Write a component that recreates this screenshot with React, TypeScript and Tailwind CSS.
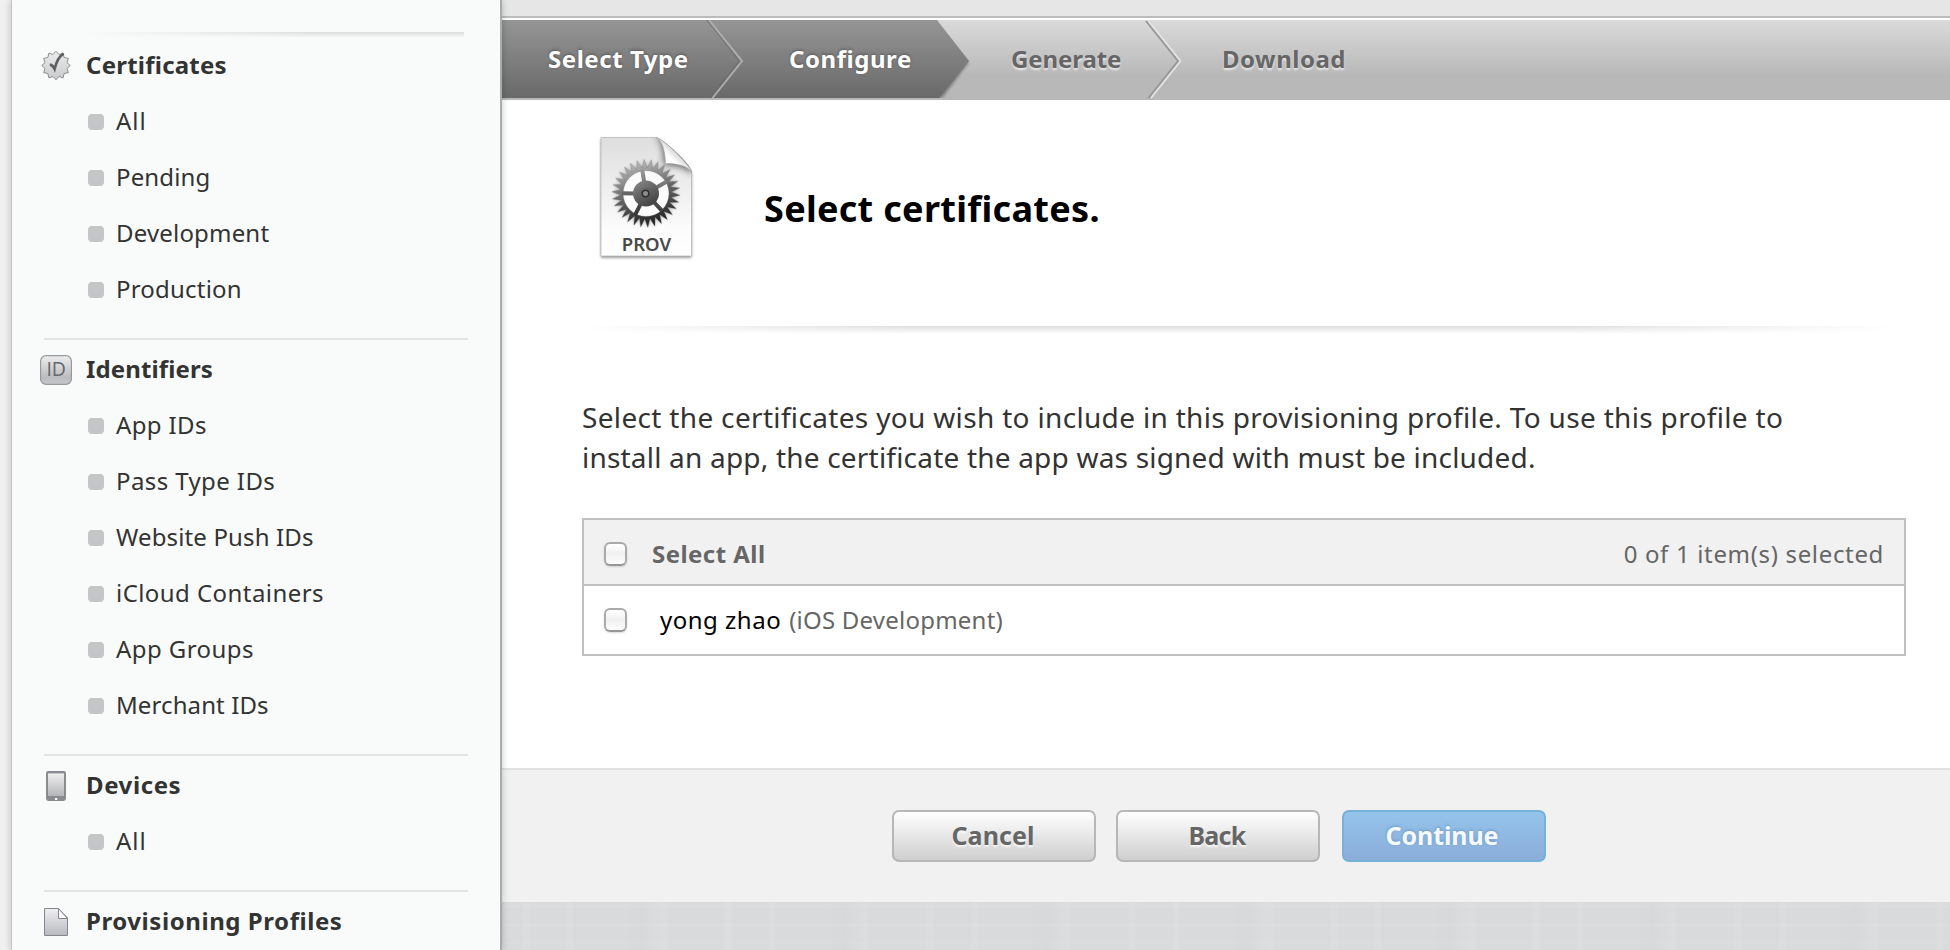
import type { ReactNode } from 'react';

type Item = { label: string; tracking: string };
type Section = { title: string; tracking: string; icon: ReactNode; items: Item[] };

function starPath(cx: number, cy: number, outer: number, inner: number, teeth: number, offset = 0) {
  const pts: string[] = [];
  for (let i = 0; i < teeth * 2; i++) {
    const r = i % 2 === 0 ? outer : inner;
    const a = (i * Math.PI) / teeth + offset;
    pts.push(`${(cx + r * Math.cos(a)).toFixed(2)} ${(cy + r * Math.sin(a)).toFixed(2)}`);
  }
  return `M${pts.join('L')}Z`;
}

function circlePath(cx: number, cy: number, r: number) {
  return `M${cx - r} ${cy}a${r} ${r} 0 1 0 ${r * 2} 0a${r} ${r} 0 1 0 ${-r * 2} 0Z`;
}

function CertificateIcon() {
  return (
    <svg width="32" height="34" viewBox="0 0 32 34" className="shrink-0">
      <defs>
        <linearGradient id="seal" x1="0" y1="0" x2="0" y2="1">
          <stop offset="0" stopColor="#ececed" />
          <stop offset="1" stopColor="#c9cacc" />
        </linearGradient>
      </defs>
      <path d={starPath(16, 17.500, 14.300, 11.400, 12, Math.PI / 2)} fill="url(#seal)" stroke="#8f9092" strokeWidth="1" />
      <path d="M9.8 16.6C12 16.8 13.4 18.4 14.6 21C16.4 13.400 18.6 8.6 23.6 5.6" fill="none" stroke="#5d5e60" strokeWidth="2.6" />
    </svg>
  );
}

function IdIcon() {
  return (
    <svg width="32" height="34" viewBox="0 0 32 34" className="shrink-0">
      <defs>
        <linearGradient id="idbox" x1="0" y1="0" x2="0" y2="1">
          <stop offset="0" stopColor="#ededee" />
          <stop offset="0.75" stopColor="#bcbdc0" />
          <stop offset="1" stopColor="#c6c7ca" />
        </linearGradient>
      </defs>
      <rect x="0.6" y="3.6" width="30.8" height="28.8" rx="5.5" fill="url(#idbox)" stroke="#98999c" strokeWidth="1.2" />
      <text x="16.2" y="24" textAnchor="middle" fontSize="19.500" className="fill-[#66676a] font-['Open_Sans',sans-serif] font-medium">
        ID
      </text>
    </svg>
  );
}

function DeviceIcon() {
  return (
    <svg width="32" height="34" viewBox="0 0 32 34" className="shrink-0">
      <defs>
        <linearGradient id="screen" x1="0" y1="0" x2="0" y2="1">
          <stop offset="0" stopColor="#efeff0" />
          <stop offset="1" stopColor="#b4b5b8" />
        </linearGradient>
      </defs>
      <rect x="6" y="3" width="20" height="30" rx="2.4" fill="#8a8b8f" />
      <rect x="8" y="5.4" width="16" height="22.6" fill="url(#screen)" />
      <rect x="15" y="30" width="2.2" height="2" fill="#fff" />
    </svg>
  );
}

function ProfileIcon() {
  return (
    <svg width="32" height="34" viewBox="0 0 32 34" className="shrink-0">
      <defs>
        <linearGradient id="page" x1="0" y1="0" x2="0" y2="1">
          <stop offset="0" stopColor="#efeff1" />
          <stop offset="1" stopColor="#b9bac1" />
        </linearGradient>
      </defs>
      <path d="M4.5 4.5H18.500L27.5 14V31.5H4.5Z" fill="url(#page)" stroke="#85868b" strokeWidth="1" />
      <path d="M18.5 4.5V14.5H27.5Z" fill="#fdfdfd" stroke="#85868b" strokeWidth="1" />
    </svg>
  );
}

const sections: Section[] = [
  {
    title: 'Certificates',
    tracking: 'tracking-[0.23px]',
    icon: <CertificateIcon />,
    items: [
      { label: 'All', tracking: 'tracking-[1px]' },
      { label: 'Pending', tracking: 'tracking-[0.15px]' },
      { label: 'Development', tracking: 'tracking-[0.18px]' },
      { label: 'Production', tracking: 'tracking-[0.2px]' },
    ],
  },
  {
    title: 'Identifiers',
    tracking: 'tracking-[0.12px]',
    icon: <IdIcon />,
    items: [
      { label: 'App IDs', tracking: 'tracking-[0.37px]' },
      { label: 'Pass Type IDs', tracking: 'tracking-[0.4px]' },
      { label: 'Website Push IDs', tracking: 'tracking-[0.14px]' },
      { label: 'iCloud Containers', tracking: 'tracking-[0.44px]' },
      { label: 'App Groups', tracking: 'tracking-[0.43px]' },
      { label: 'Merchant IDs', tracking: 'tracking-[0.1px]' },
    ],
  },
  {
    title: 'Devices',
    tracking: 'tracking-[0.6px]',
    icon: <DeviceIcon />,
    items: [{ label: 'All', tracking: 'tracking-[1px]' }],
  },
  { title: 'Provisioning Profiles', tracking: 'tracking-[0.56px]', icon: <ProfileIcon />, items: [] },
];

function Sidebar() {
  return (
    <aside className="relative z-10 box-border w-[491px] shrink-0 overflow-visible border-r-2 border-l border-r-[#a9acab] border-l-[#c4c6c5] bg-[#f9fbfa] shadow-[0_0_7px_rgba(0,0,0,0.22)]">
      <div className="mt-8 -mb-px ml-[72px] h-1.5 w-[380px] bg-linear-to-b from-[#dcdedd] to-[#f9fbfa] mask-l-from-40% mask-l-to-100%" />
      {sections.map((s, i) => (
        <section key={s.title} className="pb-[21px] pl-7">
          {i > 0 && <div className="mb-px ml-1 h-0.5 w-[424px] bg-[#e3e5e4]" />}
          <h2 className="flex h-14 items-center text-2xl leading-[56px] font-bold text-[#333]">
            {s.icon}
            <span className={`ml-[14px] ${s.tracking}`}>{s.title}</span>
          </h2>
          <ul>
            {s.items.map((it) => (
              <li key={it.label} className="flex h-14 items-center pl-12 text-2xl leading-[56px] text-[#333]">
                <span className="mt-0.5 size-4 shrink-0 rounded bg-[#c4c5c7]" />
                <span className={`ml-3 ${it.tracking}`}>{it.label}</span>
              </li>
            ))}
          </ul>
        </section>
      ))}
    </aside>
  );
}

function StepBar() {
  return (
    <nav className="relative h-20 bg-linear-to-b from-[#dadada] from-0% to-[#b8b8b8] to-70%">
      <svg width="1448" height="80" viewBox="0 0 1448 80" className="absolute top-0 left-0">
        <defs>
          <linearGradient id="dark" x1="0" y1="0" x2="0" y2="1">
            <stop offset="0" stopColor="#959595" />
            <stop offset="1" stopColor="#696969" />
          </linearGradient>
          <filter id="soft" x="-5%" y="-5%" width="110%" height="115%">
            <feGaussianBlur stdDeviation="1.6" />
          </filter>
        </defs>
        <path d="M420 22L467 42L440 78H400Z" fill="#000" opacity="0.35" filter="url(#soft)" />
        <path d="M0 0H435L467 41L437 78H0Z" fill="url(#dark)" />
        <rect x="0" y="78" width="1448" height="2" fill="#b8b8b8" />
        <path d="M205 0L237.500 41L208 78" fill="none" stroke="#666" strokeWidth="1.500" opacity="0.5" />
        <path d="M207 0L240 41L210.500 78" fill="none" stroke="#acacac" strokeWidth="2" />
        <path d="M644 1L676 41L646.500 78" fill="none" stroke="#989898" strokeWidth="2" />
        <path d="M646.500 1L678.500 41L649 78" fill="none" stroke="#e4e4e4" strokeWidth="1.700" />
      </svg>
      <ol className="relative flex h-full pt-[21px] text-2xl leading-9 font-bold whitespace-nowrap">
        <li className="w-[241px] pl-[46px] tracking-[0.55px] text-white [text-shadow:0_-1px_3px_rgba(0,0,0,0.35)]">Select Type</li>
        <li className="w-[222px] pl-[46px] tracking-[0.55px] text-white [text-shadow:0_-1px_3px_rgba(0,0,0,0.35)]">Configure</li>
        <li className="w-[212px] pl-[46px] tracking-[-0.1px] text-[#666] [text-shadow:0_2px_2px_rgba(255,255,255,0.65)]">Generate</li>
        <li className="pl-[45px] tracking-[0.5px] text-[#666] [text-shadow:0_2px_2px_rgba(255,255,255,0.65)]">Download</li>
      </ol>
    </nav>
  );
}

const gearRing = starPath(56, 63.5, 34, 25.5, 30, 0.05) + circlePath(56, 63.5, 23);

function ProvisioningFileIcon() {
  return (
    <svg width="110" height="135" viewBox="0 0 110 135" className="mt-[30px] ml-2 shrink-0">
      <defs>
        <linearGradient id="sheet" x1="0" y1="0" x2="0" y2="1">
          <stop offset="0" stopColor="#dedede" />
          <stop offset="0.75" stopColor="#fbfbfb" />
          <stop offset="1" stopColor="#ffffff" />
        </linearGradient>
        <linearGradient id="gear" x1="0.25" y1="0" x2="0.55" y2="1">
          <stop offset="0" stopColor="#c4c4c4" />
          <stop offset="0.5" stopColor="#686868" />
          <stop offset="1" stopColor="#1c1c1c" />
        </linearGradient>
        <linearGradient id="hub" x1="0.2" y1="0" x2="0.8" y2="1">
          <stop offset="0" stopColor="#848484" />
          <stop offset="1" stopColor="#3c3c3c" />
        </linearGradient>
        <linearGradient id="spokes" x1="0" y1="40" x2="0" y2="86" gradientUnits="userSpaceOnUse">
          <stop offset="0" stopColor="#969696" />
          <stop offset="1" stopColor="#333" />
        </linearGradient>
        <linearGradient id="curl" x1="0.05" y1="0.95" x2="0.6" y2="0.4">
          <stop offset="0" stopColor="#ffffff" />
          <stop offset="0.65" stopColor="#ffffff" />
          <stop offset="1" stopColor="#cfcfcf" />
        </linearGradient>
        <filter id="blur2" x="-20%" y="-20%" width="140%" height="140%">
          <feGaussianBlur stdDeviation="1.8" />
        </filter>
        <filter id="blur4" x="-50%" y="-50%" width="200%" height="200%">
          <feGaussianBlur stdDeviation="3.5" />
        </filter>
        <clipPath id="sheetClip">
          <path d="M11 7.500H66C71 7.500 101 34 101.500 42V126H11Z" />
        </clipPath>
      </defs>
      <path d="M11 9H66C70 9 101 36 101.500 44V127.500H11Z" fill="#000" opacity="0.5" filter="url(#blur2)" />
      <path d="M11 7.500H66C71 7.500 101 34 101.500 42V126H11Z" fill="url(#sheet)" stroke="#bdbdbd" strokeWidth="0.8" />
      <g clipPath="url(#sheetClip)">
        <path d="M66 7C73 10 74 22 74 35C86 35 98 37 102 45L106 0Z" fill="#000" opacity="0.6" filter="url(#blur4)" />
      </g>
      <path d={gearRing} fillRule="evenodd" fill="#000" opacity="0.35" filter="url(#blur2)" />
      <path d={circlePath(56, 63.5, 23)} fill="#fff" opacity="0.8" />
      <path d={gearRing} fillRule="evenodd" fill="url(#gear)" stroke="#777" strokeWidth="0.3" />
      <g stroke="url(#spokes)" strokeWidth="4">
        {[180.5, 261, 330, 47, 117].map((deg) => {
          const a = (deg * Math.PI) / 180;
          return <path key={deg} d={`M${56 + 10 * Math.cos(a)} ${63.5 + 10 * Math.sin(a)}L${56 + 24 * Math.cos(a)} ${63.5 + 24 * Math.sin(a)}`} />;
        })}
      </g>
      <circle cx="56" cy="63.5" r="13" fill="url(#hub)" />
      <circle cx="55.5" cy="63.5" r="3.3" fill="#8c8c8c" stroke="#303030" strokeWidth="1.6" />
      <path d="M66 7.5C72 10 75 20 75.500 33.500C85 33.5 97 35 101.5 42C101 36 74 9 66 7.500Z" fill="url(#curl)" stroke="#a5a5a5" strokeWidth="0.6" />
      <text x="56.5" y="120.5" textAnchor="middle" fontSize="18.5" className="fill-[#4a4a4a] font-['Noto_Sans',sans-serif] font-semibold">
        PROV
      </text>
    </svg>
  );
}

function Checkbox() {
  return (
    <span className="h-6 w-[23px] shrink-0 rounded-[6px] border-2 border-[#aaa] border-b-[#969696] bg-linear-to-b from-white via-[#f0f0f0] to-[#fdfdfd] shadow-[0_1px_2px_rgba(0,0,0,0.15)]" />
  );
}

function CertificateTable() {
  return (
    <div className="mt-[41px] h-[138px] w-[1324px] border-2 border-[#c0c0c0] text-2xl leading-8">
      <div className="flex h-[66px] items-center border-b-2 border-[#c0c0c0] bg-[#f1f1f1] pt-1 pr-[20px] pl-5 text-[#666]">
        <Checkbox />
        <span className="ml-[25px] font-bold tracking-[0.45px]">Select All</span>
        <span className="ml-auto tracking-[0.66px]">0 of 1 item(s) selected</span>
      </div>
      <div className="flex h-[68px] items-center pl-5">
        <Checkbox />
        <span className="ml-[33px] tracking-[0.5px] text-black">yong zhao</span>
        <span className="ml-2 tracking-[0.22px] text-[#666]">(iOS Development)</span>
      </div>
    </div>
  );
}

function Footer() {
  const base = 'flex h-[52px] w-[204px] items-center justify-center rounded-[7px] border-2 pb-0.5 text-[25px] leading-8 font-bold';
  const plain =
    'border-[#b7b7b7] bg-linear-to-b from-white to-[#cfcfcf] text-[#666] [text-shadow:0_2px_2px_rgba(255,255,255,0.8)]';
  return (
    <footer className="flex h-[134px] border-t-2 border-[#e2e2e2] bg-[#f1f1f1] pt-10 pl-[390px]">
      <button className={`${base} ${plain} pr-0.5 tracking-[0.1px]`}>Cancel</button>
      <button className={`${base} ${plain} ml-5 pr-0.5 tracking-[-0.7px]`}>Back</button>
      <button
        className={`${base} ml-[22px] border-[#76b1d7] bg-linear-to-b from-[#94c4eb] to-[#8badd9] pr-1 text-[#f6f9fc] tracking-[-0.1px] [text-shadow:0_-1px_3px_rgba(60,110,160,0.45)]`}
      >
        Continue
      </button>
    </footer>
  );
}

export default function App() {
  return (
    <div className="flex h-[950px] w-[1950px] overflow-hidden bg-[#f0f0f0] pl-[11px] font-['Noto_Sans',sans-serif]">
      <Sidebar />
      <main className="flex min-w-0 flex-1 flex-col bg-white">
        <div className="h-[18px] shrink-0 border-b-2 border-[#bcbcbc] bg-[#e6e6e6]" />
        <div className="h-0.5 shrink-0 bg-white" />
        <StepBar />
        <div className="h-[668px] pl-20">
          <div className="flex h-[226px]">
            <ProvisioningFileIcon />
            <h1 className="mt-[85px] ml-16 text-4xl leading-[48px] font-bold tracking-[0.3px] text-black">Select certificates.</h1>
          </div>
          <div className="h-2 w-[1312px] bg-linear-to-b from-[#dedede] to-white mask-x-from-75% mask-x-to-100%" />
          <p className="mt-[63px] text-[28px] leading-10 whitespace-nowrap text-[#333]">
            <span className="block tracking-[0.33px]">
              Select the certificates you wish to include in this provisioning profile. To use this profile to
            </span>
            <span className="block tracking-[0.2px]">
              install an app, the certificate the app was signed with must be included.
            </span>
          </p>
          <CertificateTable />
        </div>
        <Footer />
        <div className="flex-1 bg-[#d9dadc] bg-[repeating-linear-gradient(90deg,transparent_0_18px,rgba(255,255,255,0.07)_22px_26px,transparent_30px_64px,rgba(255,255,255,0.09)_67px_69px,transparent_73px_120px,rgba(0,0,0,0.008)_140px,rgba(255,255,255,0.07)_160px_163px,transparent_168px_202px),repeating-linear-gradient(0deg,transparent_0_4px,rgba(255,255,255,0.06)_7px,transparent_11px_22px,rgba(255,255,255,0.07)_25px,transparent_28px_37px)]" />
      </main>
    </div>
  );
}
